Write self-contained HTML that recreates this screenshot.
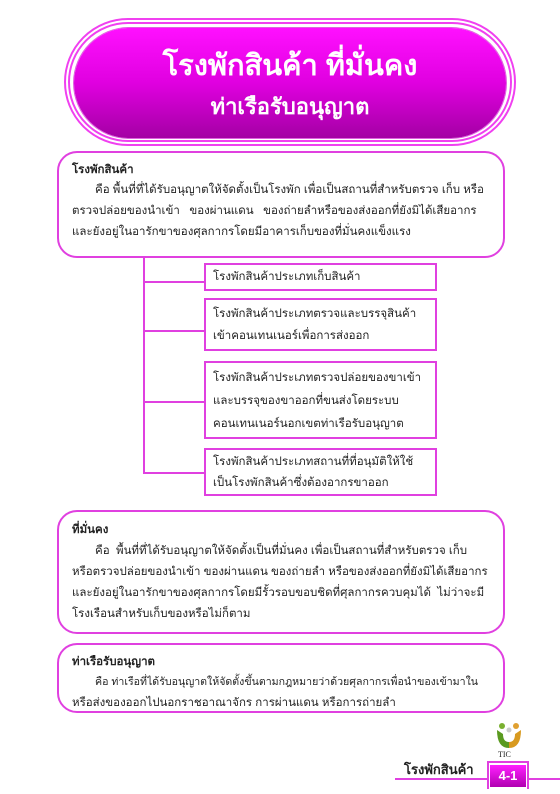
<!DOCTYPE html>
<html><head><meta charset="utf-8"><style>
*{margin:0;padding:0;box-sizing:border-box}
body{width:560px;height:794px;background:#fff;position:relative;overflow:hidden;font-family:"Liberation Sans","DejaVu Sans",sans-serif;color:#222;font-size:11.5px}
.a{position:absolute}
.box{position:absolute;border:2px solid #e040e0;border-radius:20px;background:#fff}
.sb{position:absolute;border:2px solid #e040e0;background:#fff}
.l{position:absolute;white-space:nowrap;line-height:20px}
.b{font-weight:bold}
.ln{position:absolute;background:#e040e0}
</style></head><body>
<div class="a" style="left:64px;top:18px;width:452px;height:128px;border-radius:64px;border:2px solid #f040f0;"></div>
<div class="a" style="left:68px;top:22px;width:444px;height:120px;border-radius:60px;border:2px solid #f040f0;"></div>
<div class="a" style="left:74px;top:28px;width:432px;height:110px;border-radius:55px;background:linear-gradient(#ff10ff,#e000e0 50%,#a400a4);box-shadow:0 0 0 1px #e060e0"></div>
<div class="a b" style="left:74px;top:46px;width:432px;text-align:center;color:#fff;font-size:29px;line-height:40px">โรงพักสินค้า ที่มั่นคง</div>
<div class="a b" style="left:74px;top:92px;width:432px;text-align:center;color:#fff;font-size:22px;line-height:30px">ท่าเรือรับอนุญาต</div>

<div class="box" style="left:57px;top:151px;width:448px;height:107px"></div>
<div class="l b" style="left:72px;top:160px">โรงพักสินค้า</div>
<div class="l" style="left:95px;top:180px">คือ พื้นที่ที่ได้รับอนุญาตให้จัดตั้งเป็นโรงพัก เพื่อเป็นสถานที่สำหรับตรวจ เก็บ หรือ</div>
<div class="l" style="left:72px;top:201px">ตรวจปล่อยของนำเข้า &nbsp; ของผ่านแดน &nbsp; ของถ่ายลำหรือของส่งออกที่ยังมิได้เสียอากร</div>
<div class="l" style="left:72px;top:222px">และยังอยู่ในอารักขาของศุลกากรโดยมีอาคารเก็บของที่มั่นคงแข็งแรง</div>

<div class="ln" style="left:143px;top:257px;width:2px;height:217px"></div>
<div class="ln" style="left:143px;top:281px;width:62px;height:2px"></div>
<div class="ln" style="left:143px;top:330px;width:62px;height:2px"></div>
<div class="ln" style="left:143px;top:401px;width:62px;height:2px"></div>
<div class="ln" style="left:143px;top:472px;width:62px;height:2px"></div>

<div class="sb" style="left:204px;top:263px;width:233px;height:28px"></div>
<div class="l" style="left:213px;top:267px">โรงพักสินค้าประเภทเก็บสินค้า</div>
<div class="sb" style="left:204px;top:298px;width:233px;height:53px"></div>
<div class="l" style="left:213px;top:303px;line-height:22px">โรงพักสินค้าประเภทตรวจและบรรจุสินค้า<br>เข้าคอนเทนเนอร์เพื่อการส่งออก</div>
<div class="sb" style="left:204px;top:361px;width:233px;height:78px"></div>
<div class="l" style="left:213px;top:367px;line-height:23px">โรงพักสินค้าประเภทตรวจปล่อยของขาเข้า<br>และบรรจุของขาออกที่ขนส่งโดยระบบ<br>คอนเทนเนอร์นอกเขตท่าเรือรับอนุญาต</div>
<div class="sb" style="left:204px;top:448px;width:233px;height:48px"></div>
<div class="l" style="left:213px;top:452px;line-height:21px">โรงพักสินค้าประเภทสถานที่ที่อนุมัติให้ใช้<br>เป็นโรงพักสินค้าซึ่งต้องอากรขาออก</div>

<div class="box" style="left:57px;top:510px;width:448px;height:124px"></div>
<div class="l b" style="left:72px;top:520px">ที่มั่นคง</div>
<div class="l" style="left:95px;top:541px">คือ &nbsp;พื้นที่ที่ได้รับอนุญาตให้จัดตั้งเป็นที่มั่นคง เพื่อเป็นสถานที่สำหรับตรวจ เก็บ</div>
<div class="l" style="left:72px;top:562px">หรือตรวจปล่อยของนำเข้า ของผ่านแดน ของถ่ายลำ หรือของส่งออกที่ยังมิได้เสียอากร</div>
<div class="l" style="left:72px;top:583px">และยังอยู่ในอารักขาของศุลกากรโดยมีรั้วรอบขอบชิดที่ศุลกากรควบคุมได้ &nbsp;ไม่ว่าจะมี</div>
<div class="l" style="left:72px;top:604px">โรงเรือนสำหรับเก็บของหรือไม่ก็ตาม</div>

<div class="box" style="left:57px;top:643px;width:448px;height:70px"></div>
<div class="l b" style="left:72px;top:652px">ท่าเรือรับอนุญาต</div>
<div class="l" style="left:95px;top:672px;font-size:10.6px">คือ ท่าเรือที่ได้รับอนุญาตให้จัดตั้งขึ้นตามกฎหมายว่าด้วยศุลกากรเพื่อนำของเข้ามาใน</div>
<div class="l" style="left:72px;top:693px">หรือส่งของออกไปนอกราชอาณาจักร การผ่านแดน หรือการถ่ายลำ</div>

<svg class="a" style="left:494px;top:722px" width="30" height="28" viewBox="0 0 30 28">
<circle cx="8" cy="4" r="3" fill="#7ab030"/><circle cx="22" cy="4" r="3" fill="#e0a030"/><circle cx="15" cy="8" r="2.5" fill="#ccc"/>
<path d="M3 8 Q3 26 15 26 L15 20 Q9 20 9 12 Z" fill="#5a9a20"/>
<path d="M27 8 Q27 26 15 26 L15 20 Q21 20 21 12 Z" fill="#d89a20"/>
</svg>
<div class="a" style="left:498px;top:750px;font-size:8px;font-family:'Liberation Serif',serif">TIC</div>
<div class="ln" style="left:395px;top:778px;width:93px;height:2px"></div>
<div class="ln" style="left:528px;top:778px;width:32px;height:2px"></div>
<div class="a" style="left:487px;top:761px;width:42px;height:28px;border:2px solid #e040e0;border-bottom:none;background:#fff"></div>
<div class="a b" style="left:490px;top:765px;width:36px;height:22px;background:linear-gradient(#ff20ff,#b000b0);color:#fff;text-align:center;line-height:22px;font-size:13px">4-1</div>
<div class="l b" style="left:404px;top:760px;font-size:13px">โรงพักสินค้า</div>
</body></html>
